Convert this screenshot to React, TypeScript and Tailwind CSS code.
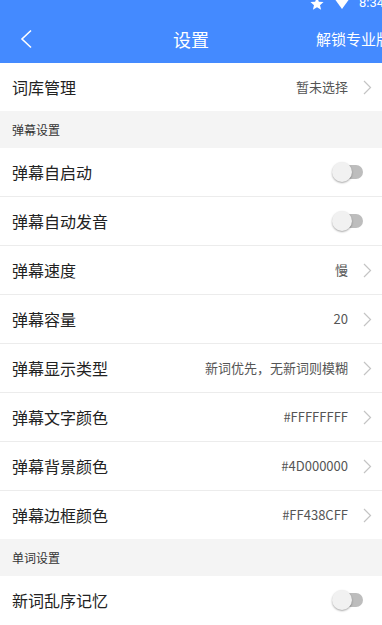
import React from 'react';

type Row =
  | { kind: 'section'; label: string }
  | { kind: 'link'; label: string; value: string }
  | { kind: 'toggle'; label: string };

const rows: Row[] = [
  { kind: 'link', label: '词库管理', value: '暂未选择' },
  { kind: 'section', label: '弹幕设置' },
  { kind: 'toggle', label: '弹幕自启动' },
  { kind: 'toggle', label: '弹幕自动发音' },
  { kind: 'link', label: '弹幕速度', value: '慢' },
  { kind: 'link', label: '弹幕容量', value: '20' },
  { kind: 'link', label: '弹幕显示类型', value: '新词优先，无新词则模糊' },
  { kind: 'link', label: '弹幕文字颜色', value: '#FFFFFFFF' },
  { kind: 'link', label: '弹幕背景颜色', value: '#4D000000' },
  { kind: 'link', label: '弹幕边框颜色', value: '#FF438CFF' },
  { kind: 'section', label: '单词设置' },
  { kind: 'toggle', label: '新词乱序记忆' },
];

const Chevron = () => (
  <svg width="9" height="15" viewBox="0 0 9 15" fill="none" className="ml-[15px]">
    <path d="M1 1l6.5 6.5L1 14" stroke="#c4c4c4" strokeWidth="1.2" />
  </svg>
);

const Toggle = () => (
  <div className="relative w-[31px] h-[20px] mr-[9px] flex items-center">
    <div className="absolute left-[6px] right-0 h-[14px] rounded-full bg-[#bdbdbd]" />
    <div className="absolute left-0 w-[20px] h-[20px] rounded-full bg-[#f1f1f1] shadow-[0_1px_2px_rgba(0,0,0,0.35)]" />
  </div>
);

export default function App() {
  return (
    <div
      className="w-[382px] h-[625px] overflow-hidden bg-white"
      style={{ fontFamily: '"Noto Sans CJK SC", Roboto, sans-serif' }}
    >
      <div className="bg-[#448aff] h-[63px] relative text-white">
        <div className="absolute right-0 top-[-5px] flex items-center gap-[6px] text-[13px] leading-[16px]" style={{ fontFamily: 'Roboto, sans-serif' }}>
          <svg width="16" height="15" viewBox="0 0 24 24" fill="white">
            <path d="M12 2l3 7 7.5.6-5.7 5 1.8 7.4L12 18l-6.6 4 1.8-7.4-5.7-5L9 9z" />
          </svg>
          <svg width="16" height="14" viewBox="0 0 16 14" fill="white" className="ml-[3px]">
            <path d="M0 2 Q8 -2 16 2 L8 13z" />
          </svg>
          <span className="ml-[3px] mr-[-2px]">8:34</span>
        </div>
        <div className="absolute inset-x-0 top-[21px] h-[36px] flex items-center">
          <svg width="14" height="20" viewBox="0 0 14 20" fill="none" className="ml-[19px]">
            <path d="M12 1.5L3 10l9 8.5" stroke="white" strokeWidth="1.6" />
          </svg>
          <span className="absolute left-1/2 -translate-x-1/2 text-[18px]">设置</span>
          <span className="absolute left-[316px] text-[15px] whitespace-nowrap">解锁专业版</span>
        </div>
      </div>
      {rows.map((r, i) => {
        if (r.kind === 'section') {
          return (
            <div key={i} className="h-[37px] bg-[#f4f4f4] flex items-center pl-[12px] text-[12px] text-[#333]">
              {r.label}
            </div>
          );
        }
        const next = rows[i + 1];
        const divider = next && next.kind !== 'section' ? 'h-[49px] border-b border-[#ececec]' : 'h-[48px]';
        return (
          <div key={i} className={`flex items-center pl-[12px] pr-[10px] ${divider}`}>
            <span className="flex-1 text-[16px] text-[#222]">{r.label}</span>
            {r.kind === 'link' ? (
              <>
                <span className="text-[13px] text-[#555]">{r.value}</span>
                <Chevron />
              </>
            ) : (
              <Toggle />
            )}
          </div>
        );
      })}
    </div>
  );
}
